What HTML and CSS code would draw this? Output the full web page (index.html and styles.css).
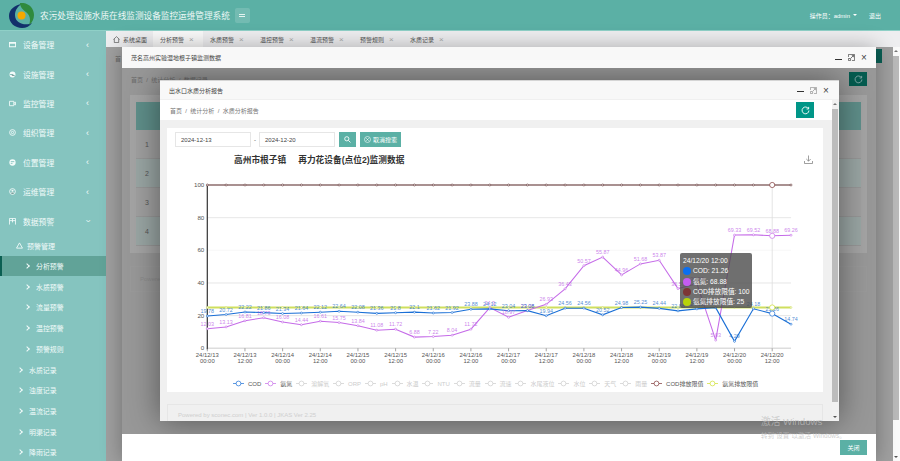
FILE: index.html
```html
<!DOCTYPE html>
<html lang="zh">
<head>
    <meta charset="UTF-8">
    <title>农污处理设施水质在线监测设备监控运维管理系统</title>
    <link rel="stylesheet" href="styles.css">
</head>
<body>
    <header class="topbar">
        <svg class="logo" viewBox="0 0 25 25">
            <path fill="#12306b" d="M13 1C5 2 0 7 0 13c0 7 6 12 13 12 4 0 8-2 10-5-6 3-17 1-17-8C6 7 9 3 13 1z"/>
            <path fill="#2f8a3d" d="M11 0c8-1 14 5 14 12 0 4-2 8-5 10 2-5 1-10-3-13-3-2-6-5-6-9z"/>
            <circle fill="#f5a800" cx="12.5" cy="12.5" r="4"/>
        </svg>
        <span class="sys-title">农污处理设施水质在线监测设备监控运维管理系统</span>
        <span class="menu-toggle"><i></i></span>
        <div class="user-box">
            <span>操作员：admin</span><i class="caret"></i>
            <span class="logout">退出</span>
        </div>
    </header>

    <div class="layout">
        <aside class="sidebar">
            <a class="nav-item"><svg class="nav-icon" viewBox="0 0 8 8"><path fill="currentColor" d="M0 1h8v6H0zM1 3v3h6V3z"/></svg>设备管理<b class="chev">‹</b></a>
            <a class="nav-item"><svg class="nav-icon" viewBox="0 0 8 8"><circle cx="4" cy="4" r="3.4" fill="currentColor"/><path stroke="#85c4bf" d="M1 4h3l3 2"/></svg>设施管理<b class="chev">‹</b></a>
            <a class="nav-item"><svg class="nav-icon" viewBox="0 0 8 8"><path fill="none" stroke="currentColor" d="M.5 1.5h5v5h-5zM5.5 3.5l2-1v3l-2-1"/></svg>监控管理<b class="chev">‹</b></a>
            <a class="nav-item"><svg class="nav-icon" viewBox="0 0 8 8"><circle cx="4" cy="4" r="3.3" fill="none" stroke="currentColor"/><circle cx="4" cy="4" r="1.3" fill="none" stroke="currentColor"/></svg>组织管理<b class="chev">‹</b></a>
            <a class="nav-item"><svg class="nav-icon" viewBox="0 0 8 8"><circle cx="4" cy="4" r="3.6" fill="currentColor"/><path stroke="#85c4bf" d="M2 3h4M2 5h2"/></svg>位置管理<b class="chev">‹</b></a>
            <a class="nav-item"><svg class="nav-icon" viewBox="0 0 8 8"><circle cx="4" cy="4" r="3.3" fill="none" stroke="currentColor"/><circle cx="4" cy="3.2" r="1.2" fill="currentColor"/><path stroke="currentColor" d="M2 6c1-1 3-1 4 0"/></svg>运维管理<b class="chev">‹</b></a>
            <a class="nav-item"><svg class="nav-icon" viewBox="0 0 8 8"><path fill="none" stroke="currentColor" d="M.5.5h7v7M.5.5v7M.5 3h7M4 .5V5"/></svg>数据预警<b class="chev open">‹</b></a>
            <a class="sub-head"><svg class="nav-icon" viewBox="0 0 8 8"><path fill="none" stroke="currentColor" d="M4 1l3.4 6H.6z"/></svg>预警管理</a>
            <a class="sub-item active">分析预警</a>
            <a class="sub-item">水质预警</a>
            <a class="sub-item">流量预警</a>
            <a class="sub-item">温控预警</a>
            <a class="sub-item">预警规则</a>
            <a class="rec-item">水质记录</a>
            <a class="rec-item">浊度记录</a>
            <a class="rec-item">温流记录</a>
            <a class="rec-item">明渠记录</a>
            <a class="rec-item">降雨记录</a>
        </aside>

        <main class="main">
            <nav class="tabs">
                <span class="tab home"><svg viewBox="0 0 8 8"><path fill="none" stroke="#555" stroke-width=".8" d="M.5 4L4 .7 7.5 4M1.5 3.4V7.5h5V3.4"/></svg>系统桌面</span>
                <span class="tab current">分析预警<i>×</i></span>
                <span class="tab">水质预警<i>×</i></span>
                <span class="tab">温控预警<i>×</i></span>
                <span class="tab">温流预警<i>×</i></span>
                <span class="tab">预警规则<i>×</i></span>
                <span class="tab">水质记录<i>×</i></span>
            </nav>

            <div class="page">
                <span class="page-crumb">首</span>
                <span class="peek-btn"></span>
                <div class="page-scroll"><em class="arrow up"></em><span class="thumb"></span><em class="arrow down"></em></div>

                <section class="outer-modal">
                    <div class="modal-title">
                        <span>茂名高州实验湿地根子镇监测数据</span>
                        <div class="win-btns">
                            <i class="win-min"></i>
                            <svg class="win-max" viewBox="0 0 7 7"><path fill="none" stroke="#555" stroke-width=".8" d="M.4 3V.4h6.2v6.2H4M.4 4.5h2.2v2.1H.4zM3 4l2.6-2.6M3.8 1.4h1.8v1.8"/></svg>
                            <i class="win-close">×</i>
                        </div>
                    </div>
                    <div class="outer-body">
                        <div class="crumb-row dim">
                            <span>首页 &nbsp;/&nbsp; 统计分析 &nbsp;/&nbsp; 数据记录</span>
                            <span class="refresh dark">
                                <svg viewBox="0 0 10 10"><path fill="none" stroke="currentColor" d="M8.3 3A3.8 3.8 0 1 0 8.8 5M8.5 1v2.3H6.2"/></svg>
                            </span>
                        </div>
                        <div class="dim-panel">
                            <div class="dim-head"></div>
                            <div class="dim-row">1</div>
                            <div class="dim-row alt">2</div>
                            <div class="dim-row">3</div>
                            <div class="dim-row alt">4</div>
                        </div>
                        <div class="dim-foot">Powered by sconec.com</div>

                        <section class="inner-modal">
                            <div class="modal-title short">
                                <span>出水口水质分析报告</span>
                                <div class="win-btns">
                                    <i class="win-min"></i>
                                    <svg class="win-max" viewBox="0 0 7 7"><path fill="none" stroke="#999" stroke-width=".8" d="M.4 3V.4h6.2v6.2H4M.4 4.5h2.2v2.1H.4zM3 4l2.6-2.6M3.8 1.4h1.8v1.8"/></svg>
                                    <i class="win-close">×</i>
                                </div>
                            </div>
                            <div class="inner-wrap">
                                <div class="inner-main">
                                    <div class="crumb-row">
                                        <span>首页 &nbsp;/&nbsp; 统计分析 &nbsp;/&nbsp; 水质分析报告</span>
                                        <span class="refresh">
                                            <svg viewBox="0 0 10 10"><path fill="none" stroke="currentColor" d="M8.3 3A3.8 3.8 0 1 0 8.8 5M8.5 1v2.3H6.2"/></svg>
                                        </span>
                                    </div>
                                    <div class="card">
                                        <div class="filter">
                                            <span class="date-input">2024-12-13</span>
                                            <span class="dash">-</span>
                                            <span class="date-input">2024-12-20</span>
                                            <span class="btn icon-only">
                                                <svg viewBox="0 0 8 8"><circle cx="3.2" cy="3.2" r="2.4" fill="none" stroke="#fff"/><path stroke="#fff" d="M5 5l2.4 2.4"/></svg>
                                            </span>
                                            <span class="btn">
                                                <svg viewBox="0 0 8 8"><circle cx="4" cy="4" r="3.4" fill="none" stroke="#fff" stroke-width=".7"/><path stroke="#fff" stroke-width=".7" d="M2.6 2.6l2.8 2.8M5.4 2.6L2.6 5.4"/></svg>
                                                取消搜索
                                            </span>
                                        </div>
                                        <div class="chart-head">
                                            <h3>高州市根子镇&nbsp;&nbsp;&nbsp;&nbsp;&nbsp;再力花设备(点位2)监测数据</h3>
                                            <svg class="save-icon" viewBox="0 0 9 9"><path fill="none" stroke="#777" stroke-width=".7" d="M4.5 .5v5.5M2.3 4l2.2 2.2L6.7 4M.5 6v2.5h8V6"/></svg>
                                        </div>
                                        <div class="chart-box">
                                            <div id="chart"></div>
                                            <div class="chart-tip">
                                                <p>24/12/20 12:00</p>
                                                <p><i class="blue"></i>COD: 21.26</p>
                                                <p><i class="purple"></i>氨氮: 68.88</p>
                                                <p><i class="maroon"></i>COD排放限值: 100</p>
                                                <p><i class="lime"></i>氨氮排放限值: 25</p>
                                            </div>
                                        </div>
                                        <div class="legend" id="legend"></div>
                                    </div>
                                    <div class="powered">Powered by sconec.com | Ver 1.0.0 | JKAS Ver 2.25</div>
                                </div>
                                <div class="inner-scroll"><em class="arrow up"></em><span class="thumb"></span><em class="arrow down"></em></div>
                            </div>
                        </section>
                    </div>
                    <div class="modal-foot"><span class="close-btn">关闭</span></div>
                </section>

                <div class="watermark">
                    <strong>激活 Windows</strong>
                    <span>转到"设置"以激活 Windows。</span>
                </div>
            </div>
        </main>
    </div>

    <script src="chart.js"></script>
</body>
</html>
```

FILE: styles.css
```css
* {
    margin: 0;
    padding: 0;
    box-sizing: border-box;
}

body {
    width: 900px;
    height: 461px;
    overflow: hidden;
    font-family: "Liberation Sans", "Noto Sans CJK SC", sans-serif;
    font-size: 7px;
    color: #444;
    background: #fff;
}

/* top bar */
.topbar {
    height: 31px;
    display: flex;
    align-items: center;
    padding-left: 9px;
    background: #5bb0a5;
    border-bottom: 1px solid #8fd0c7;
    color: #fff;
}

.logo {
    width: 25px;
    height: 25px;
}

.sys-title {
    margin-left: 6px;
    font-size: 8.65px;
    color: #eef8f6;
}

.menu-toggle {
    width: 15px;
    height: 15px;
    margin-left: 5px;
    display: flex;
    align-items: center;
    justify-content: center;
    background: rgba(255,255,255,0.15);
    border-radius: 2px;
}

.menu-toggle i {
    width: 6px;
    height: 3px;
    border-top: 1px solid #e4f3f0;
    border-bottom: 1px solid #e4f3f0;
}

.user-box {
    margin-left: auto;
    margin-right: 19px;
    display: flex;
    align-items: center;
    font-size: 6px;
}

.caret {
    margin-left: 3px;
    border: 2.5px solid transparent;
    border-top-color: #fff;
    border-bottom: 0;
}

.logout {
    margin-left: 12px;
}

/* side menu */
.layout {
    display: flex;
    height: 430px;
}

.sidebar {
    width: 106px;
    flex: none;
    background: #85c4bf;
    color: #f2fbfa;
    font-size: 7.8px;
    overflow: hidden;
}

.nav-item {
    height: 29.4px;
    display: flex;
    align-items: center;
    padding-left: 9px;
}

.nav-item:first-child {
    margin-top: -1px;
}

.nav-icon {
    width: 7px;
    height: 7px;
    margin-right: 7px;
    flex: none;
}

.chev {
    margin-left: auto;
    margin-right: 17px;
    font-size: 9px;
    font-weight: normal;
}

.chev.open {
    transform: rotate(-90deg);
}

.sub-head {
    height: 20px;
    display: flex;
    align-items: center;
    padding-left: 16px;
    font-size: 7px;
}

.sub-head .nav-icon {
    margin-right: 4px;
}

.sub-item,
.rec-item {
    height: 20.7px;
    display: flex;
    align-items: center;
    font-size: 6.9px;
}

.sub-item {
    padding-left: 25px;
}

.rec-item {
    padding-left: 18px;
}

.sub-item::before,
.rec-item::before {
    content: "";
    width: 3px;
    height: 3px;
    margin-right: 7px;
    border-top: 1px solid #f2fbfa;
    border-right: 1px solid #f2fbfa;
    transform: rotate(45deg);
}

.sub-item.active {
    background: #61a398;
    border-left: 2px solid #0b5f52;
    padding-left: 23px;
}

/* tabs */
.main {
    flex: 1;
    display: flex;
    flex-direction: column;
}

.tabs {
    height: 16px;
    flex: none;
    display: flex;
    background: #eeeef0;
    font-size: 6px;
    color: #555;
}

.tab {
    width: 50px;
    display: flex;
    align-items: center;
    padding-left: 7px;
}

.tab i {
    margin-left: 5px;
    font-style: normal;
    font-size: 8px;
    color: #aaa;
}

.tab.home {
    width: 47px;
    padding-left: 7px;
}

.tab.home svg {
    width: 7px;
    height: 7px;
    margin-right: 3px;
}

.tab.current {
    background: #f9f9f9;
}

/* dimmed page behind the dialogs */
.page {
    position: relative;
    flex: 1;
    background: #a0a0a0;
}

.page-crumb {
    position: absolute;
    left: 9px;
    top: 7px;
    color: #666;
    font-size: 6px;
}

.peek-btn {
    position: absolute;
    left: 770px;
    top: 2px;
    width: 6px;
    height: 14px;
    background: #0a5f54;
}

.page-scroll {
    position: absolute;
    right: 0;
    top: 0;
    bottom: 0;
    width: 7px;
    background: #fafafa;
}

.page-scroll .thumb {
    position: absolute;
    left: 0;
    top: 9px;
    width: 6px;
    height: 364px;
    background: #b9b9b9;
}

.arrow {
    position: absolute;
    left: 1px;
    border: 2px solid transparent;
}

.arrow.up {
    top: 3px;
    border-top: 0;
    border-bottom-color: #777;
}

.arrow.down {
    bottom: 3px;
    border-bottom: 0;
    border-top-color: #555;
}

.outer-modal {
    position: absolute;
    left: 16px;
    top: 0;
    bottom: 0;
    width: 754px;
    display: flex;
    flex-direction: column;
    box-shadow: 0 0 20px rgba(0,0,0,0.3);
}

.modal-title {
    height: 21px;
    flex: none;
    display: flex;
    align-items: center;
    justify-content: space-between;
    padding: 0 8px 0 9px;
    background: #f8f8f8;
    font-size: 6px;
    color: #444;
}

.modal-title.short {
    height: 20px;
    border-top: 1px solid #d5d5d5;
    border-bottom: 1px solid #f0f0f0;
    padding: 0 9px 0 9px;
}

.win-btns {
    display: flex;
    align-items: center;
    gap: 6px;
}

.win-btns i,
.win-max {
    width: 7px;
    height: 7px;
    display: block;
    font-style: normal;
}

.win-min {
    border-bottom: 1px solid #333;
    height: 4px !important;
}

.win-close {
    font-size: 10px;
    line-height: 7px;
    color: #444;
}

.outer-body {
    position: relative;
    flex: 1;
    overflow: hidden;
    padding: 0 9px 0 8px;
    background: #989898;
}

.crumb-row {
    height: 20px;
    display: flex;
    align-items: center;
    justify-content: space-between;
    padding: 0 18px 0 10px;
    background: #fff;
    font-size: 6px;
    color: #777;
}

.crumb-row.dim {
    height: 22px;
    padding: 0 0 0 1px;
    background: none;
    color: #6a6a6a;
}

.refresh {
    width: 18px;
    height: 16px;
    display: flex;
    align-items: center;
    justify-content: center;
    background: #009688;
    color: #fff;
}

.refresh.dark {
    height: 14px;
    background: #055c50;
    color: #8aa;
}

.refresh svg {
    width: 9px;
    height: 9px;
}

.dim-panel {
    margin-top: 5px;
    padding: 7px 6px;
    background: #a4a4a4;
}

.dim-head {
    height: 28px;
    background: #5f8f8a;
}

.dim-row {
    height: 29px;
    display: flex;
    align-items: center;
    padding-left: 9px;
    background: #a0a0a0;
    border-bottom: 1px solid #979797;
    color: #555;
}

.dim-row.alt {
    background: #9aa6a4;
}

.dim-foot {
    margin-top: 13px;
    height: 26px;
    display: flex;
    align-items: center;
    padding-left: 9px;
    border: 1px solid #9a9a9a;
    color: #8a8a8a;
    font-size: 6px;
}

/* report dialog */
.inner-modal {
    position: absolute;
    left: 38px;
    top: 12px;
    width: 679px;
    height: 341px;
    display: flex;
    flex-direction: column;
    background: #f0f0f0;
    box-shadow: 0 0 30px rgba(0,0,0,0.45);
}

.inner-wrap {
    flex: 1;
    display: flex;
    min-height: 0;
}

.inner-main {
    flex: 1;
    overflow: hidden;
}

.inner-scroll {
    position: relative;
    width: 7px;
    flex: none;
    background: #f1f1f1;
}

.inner-scroll .thumb {
    position: absolute;
    left: 0;
    top: 9px;
    width: 6px;
    height: 293px;
    background: #bcbcbc;
}

.card {
    margin: 8px 9px 0 7px;
    height: 264px;
    display: flex;
    flex-direction: column;
    background: #fff;
}

.filter {
    display: flex;
    align-items: center;
    padding: 4px 0 0 8px;
}

.date-input {
    width: 76px;
    height: 15px;
    display: flex;
    align-items: center;
    padding-left: 5px;
    border: 1px solid #e6e6e6;
    font-size: 6px;
    color: #444;
}

.dash {
    width: 8px;
    text-align: center;
    font-size: 6px;
}

.btn {
    height: 15px;
    margin-left: 4px;
    display: flex;
    align-items: center;
    gap: 2px;
    padding: 0 4px;
    background: #5bb0a5;
    color: #fff;
    font-size: 6px;
}

.btn svg {
    width: 7px;
    height: 7px;
}

.btn.icon-only {
    width: 17px;
    justify-content: center;
}

.chart-head {
    height: 25px;
    display: flex;
    align-items: center;
    justify-content: space-between;
    padding: 0 10px 0 67px;
}

.chart-head h3 {
    font-size: 8.7px;
    color: #333;
}

.save-icon {
    width: 9px;
    height: 9px;
}

.chart-box {
    position: relative;
    height: 200px;
}

#chart svg {
    display: block;
    font-family: "Liberation Sans", "Noto Sans CJK SC", sans-serif;
}

.chart-tip {
    position: absolute;
    left: 513px;
    top: 81px;
    width: 72px;
    height: 55px;
    padding: 3px 0 0 3px;
    background: rgba(75,75,75,0.8);
    border-radius: 2px;
    color: #fff;
    font-size: 6.7px;
    line-height: 10.3px;
    white-space: nowrap;
}

.chart-tip p {
    display: flex;
    align-items: center;
}

.chart-tip i {
    width: 8px;
    height: 8px;
    margin-right: 2px;
    border-radius: 50%;
    flex: none;
}

.chart-tip .blue { background: #0a6ff0; }
.chart-tip .purple { background: #c45cf2; }
.chart-tip .maroon { background: #7d3535; }
.chart-tip .lime { background: #b7d40a; }

.legend {
    display: flex;
    align-items: center;
    padding: 7px 0 0 66px;
    gap: 3.9px;
    font-size: 6px;
    color: #555;
}

.legend span {
    display: flex;
    align-items: center;
    gap: 4px;
    white-space: nowrap;
}

.legend span.off {
    color: #ccc;
}

.legend svg {
    width: 11px;
    height: 7px;
    flex: none;
}

.powered {
    margin: 12px 9px 0 7px;
    height: 30px;
    padding: 7px 10px;
    border: 1px solid #e6e6e6;
    color: #cfcfcf;
    font-size: 6px;
}

.modal-foot {
    position: relative;
    height: 27px;
    flex: none;
    display: flex;
    align-items: center;
    justify-content: flex-end;
    padding-right: 9px;
    background: #fff;
}

.close-btn {
    width: 27px;
    height: 15px;
    display: flex;
    align-items: center;
    justify-content: center;
    background: #5bb0a5;
    color: #fff;
    font-size: 6px;
}

.watermark {
    position: absolute;
    left: 655px;
    top: 367px;
    display: flex;
    flex-direction: column;
    gap: 2px;
    color: rgba(190,190,190,0.75);
    pointer-events: none;
}

.watermark strong {
    font-size: 9.7px;
    font-weight: normal;
}

.watermark span {
    font-size: 6.5px;
}
```

FILE: chart.js
```javascript
// 6 hour samples from 24/12/13 00:00 to 24/12/20 18:00
const cod = [19.78, 20.72, 22.22, 21.86, 21.34, 21.64, 22.12, 22.64, 22.08, 21.36, 21.8, 22.1, 21.62, 21.92, 23.88, 24.12,
    23.04, 23.08, 19.94, 24.56, 24.56, 20.52, 24.98, 25.25, 24.44, 22.88, 24.12, 24.9, 4.29, 24.18, 21.26, 14.74];
const nh3 = [12.03, 13.13, 16.81, 18.73, 16.08, 14.44, 16.61, 15.75, 13.84, 11.08, 11.72, 6.88, 7.22, 8.04, 11.72, 24.9,
    18.97, 23.08, 26.93, 36.43, 50.57, 55.87, 44.96, 51.68, 53.87, 36.58, 39.58, 5.03, 69.33, 69.52, 68.88, 69.26];
const ticks = ['24/12/13', '24/12/13', '24/12/14', '24/12/14', '24/12/15', '24/12/15', '24/12/16', '24/12/16',
    '24/12/17', '24/12/17', '24/12/18', '24/12/18', '24/12/19', '24/12/19', '24/12/20', '24/12/20'];

const W = 656, H = 200, X0 = 40.3, STEP = 18.83, Y0 = 176.3, K = 1.633;
const px = i => X0 + i * STEP;
const py = v => Y0 - v * K;
const pts = arr => arr.map((v, i) => px(i).toFixed(1) + ',' + py(v).toFixed(1)).join(' ');

function series(values, color, width, r) {
    const dots = values.map((v, i) =>
        `<circle cx="${px(i).toFixed(1)}" cy="${py(v).toFixed(1)}" r="${r}" fill="#fff" stroke="${color}" stroke-width="0.6"/>`).join('');
    return `<polyline points="${pts(values)}" fill="none" stroke="${color}" stroke-width="${width}"/>${dots}`;
}

function labels(values, color) {
    return values.map((v, i) =>
        `<text x="${px(i).toFixed(1)}" y="${(py(v) - 3).toFixed(1)}" text-anchor="middle" font-size="5.4" fill="${color}">${v}</text>`).join('');
}

let svg = `<svg width="${W}" height="${H}" viewBox="0 0 ${W} ${H}">`;

// grid and y axis labels
[[100, '#e6e6e6'], [80, '#e2e2e2'], [60, '#f5f5f5'], [40, '#dedede'], [20, '#dedede']].forEach(([v, c]) => {
    svg += `<line x1="${X0}" x2="${px(31)}" y1="${py(v)}" y2="${py(v)}" stroke="${c}" stroke-width="0.8"/>`;
});
[0, 20, 40, 60, 80, 100].forEach(v => {
    svg += `<text x="${X0 - 3}" y="${py(v) + 2}" text-anchor="end" font-size="6.2" fill="#555">${v}</text>`;
});

// axes
svg += `<line x1="${X0}" x2="${px(31)}" y1="${Y0}" y2="${Y0}" stroke="#ddd" stroke-width="1.6"/>`;
svg += `<line x1="${X0}" x2="${X0}" y1="${py(100)}" y2="${Y0 + 1}" stroke="#333" stroke-width="1.2"/>`;
ticks.forEach((t, i) => {
    const x = px(i * 2);
    svg += `<line x1="${x}" x2="${x}" y1="${Y0}" y2="${Y0 + 3}" stroke="#666" stroke-width="0.6"/>`;
    svg += `<text text-anchor="middle" font-size="5.9" fill="#555"><tspan x="${x}" y="${Y0 + 8.5}">${t}</tspan><tspan x="${x}" y="${Y0 + 14.5}">${i % 2 ? '12:00' : '00:00'}</tspan></text>`;
});

// crosshair of the hovered sample
svg += `<line x1="${px(30)}" x2="${px(30)}" y1="${py(100)}" y2="${Y0}" stroke="#ddd" stroke-width="0.8"/>`;

// series
svg += series(new Array(32).fill(25), '#cfdf5e', 1.8, 0.9);
svg += series(nh3, '#c56be8', 1.05, 1);
svg += series(cod, '#1a6fd6', 1.15, 1);
svg += series(new Array(32).fill(100), '#5e2f2f', 1.1, 1);
svg += labels(nh3, 'rgba(190,100,230,0.8)');
svg += labels(cod, 'rgba(30,110,200,0.8)');

// hover rings
[[100, '#7d3535'], [68.88, '#c56be8'], [25, '#cfdf2e'], [21.26, '#1a6fd6']].forEach(([v, c]) => {
    svg += `<circle cx="${px(30)}" cy="${py(v)}" r="2.6" fill="#fff" stroke="${c}" stroke-width="0.7"/>`;
});

svg += '</svg>';
document.getElementById('chart').innerHTML = svg;

// legend
const legend = [
    ['COD', '#1a6fd6', 1], ['氨氮', '#c56be8', 1], ['溶解氧', '#ccc'], ['ORP', '#ccc'], ['pH', '#ccc'], ['水温', '#ccc'],
    ['NTU', '#ccc'], ['流量', '#ccc'], ['流速', '#ccc'], ['水尾液位', '#ccc'], ['水位', '#ccc'], ['天气', '#ccc'], ['雨量', '#ccc'],
    ['COD排放限值', '#7d3535', 1], ['氨氮排放限值', '#cfdf2e', 1]
];

document.getElementById('legend').innerHTML = legend.map(([name, color, on]) => `
    <span class="${on ? '' : 'off'}">
        <svg viewBox="0 0 11 7"><path d="M0 3.5h11" stroke="${color}" stroke-width="0.7"/><circle cx="5.5" cy="3.5" r="2.4" fill="#fff" stroke="${color}" stroke-width="0.7"/></svg>
        ${name}
    </span>
`).join('');
```
